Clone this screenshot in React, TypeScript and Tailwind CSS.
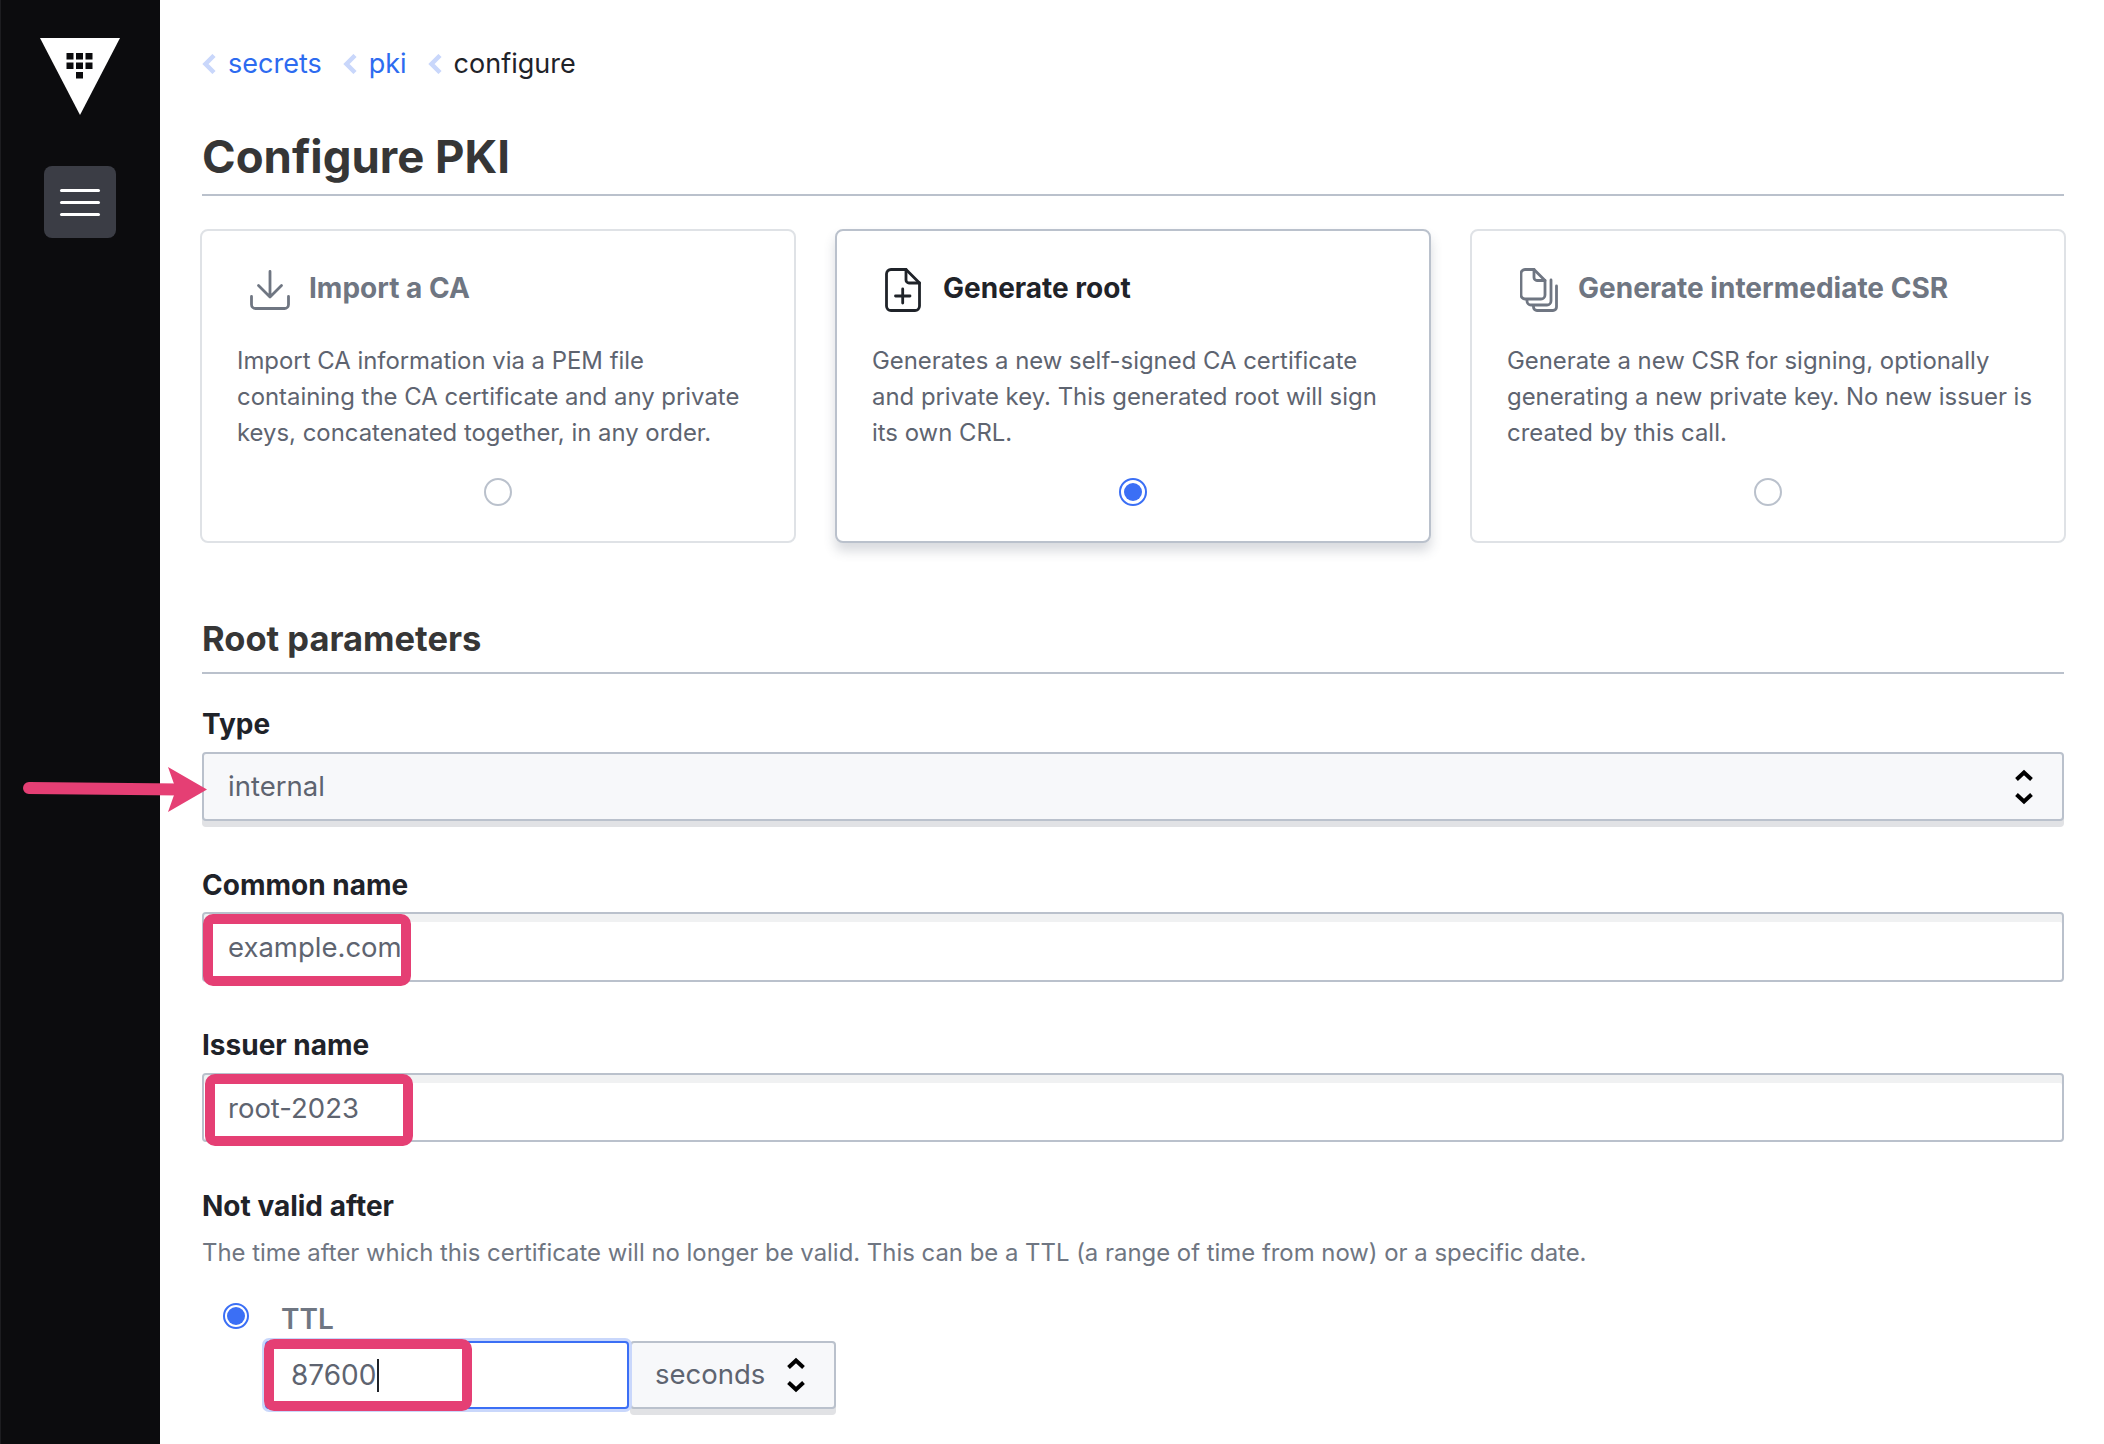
const CARDS = [
  {
    title: 'Import a CA',
    text: 'Import CA information via a PEM file containing the CA certificate and any private keys, concatenated together, in any order.',
    icon: 'import',
    gap: 'gap-[19px]',
  },
  {
    title: 'Generate root',
    text: 'Generates a new self-signed CA certificate and private key. This generated root will sign its own CRL.',
    icon: 'root',
    gap: 'gap-[22px]',
    selected: true,
  },
  {
    title: 'Generate intermediate CSR',
    text: 'Generate a new CSR for signing, optionally generating a new private key. No new issuer is created by this call.',
    icon: 'csr',
    gap: 'gap-[20px]',
  },
]

function Logo() {
  const cells = [
    [26.5, 15],
    [36, 15],
    [45.5, 15],
    [26.5, 24.5],
    [36, 24.5],
    [45.5, 24.5],
    [36, 34],
  ]
  return (
    <svg width="80" height="77" viewBox="0 0 80 77">
      <polygon points="0,0 80,0 40,77" fill="#fff" />
      {cells.map(([x, y]) => (
        <rect key={`${x}-${y}`} x={x} y={y} width="7" height="6.5" fill="#0c0c0e" />
      ))}
    </svg>
  )
}

function CardIcon({ name }: { name: string }) {
  if (name === 'import') {
    return (
      <svg width="40" height="40" viewBox="0 0 40 40" fill="none" stroke="#6f7682" strokeWidth="2.8" strokeLinecap="round" strokeLinejoin="round">
        <path d="M20 1.5V26.5M8.5 15.5L20 27L31.5 15.5" />
        <path d="M1.5 26.5V34.5a4 4 0 0 0 4 4H34.5a4 4 0 0 0 4-4V26.5" />
      </svg>
    )
  }
  if (name === 'root') {
    return (
      <svg width="36" height="44" viewBox="0 0 36 44" fill="none" stroke="#1f2329" strokeWidth="2.8" strokeLinecap="round" strokeLinejoin="round">
        <path d="M6 1.5H21L34.5 15V38a4.5 4.5 0 0 1-4.5 4.5H6A4.5 4.5 0 0 1 1.5 38V6A4.5 4.5 0 0 1 6 1.5Z" />
        <path d="M21 1.5V12a3 3 0 0 0 3 3H34.5" />
        <path d="M10.5 28H25M17.7 21V35" />
      </svg>
    )
  }
  return (
    <svg width="38" height="44" viewBox="0 0 38 44" fill="none" stroke="#6f7682" strokeWidth="2.8" strokeLinecap="round" strokeLinejoin="round">
      <path d="M5 1.5H14L25 12.5V27a4 4 0 0 1-4 4H5a4 4 0 0 1-4-4V5.5a4 4 0 0 1 4-4Z" />
      <path d="M14 1.5V9.5a3 3 0 0 0 3 3H25" />
      <path d="M7 32v1a4 4 0 0 0 4 4H27a4 4 0 0 0 4-4V12" />
      <path d="M13.5 38v1a3.5 3.5 0 0 0 3.5 3.5H33a3.5 3.5 0 0 0 3.5-3.5V18" />
    </svg>
  )
}

function Radio({ on, size = 'w-7 h-7' }: { on?: boolean; size?: string }) {
  if (on) {
    return (
      <span className={`${size} flex items-center justify-center rounded-full border-2 border-[#3b6ff5] bg-white`}>
        <span className="h-[18px] w-[18px] rounded-full bg-[#3b6ff5]" />
      </span>
    )
  }
  return <span className={`${size} rounded-full border-2 border-[#bac1cc] bg-white`} />
}

function Stepper() {
  return (
    <svg width="18" height="36" viewBox="0 0 18 36" fill="none" stroke="#000" strokeWidth="4" strokeLinejoin="miter">
      <path d="M1.5 10.5L9 3.5L16.5 10.5" />
      <path d="M1.5 25.5L9 32.5L16.5 25.5" />
    </svg>
  )
}

function Crumb({ children, current }: { children: string; current?: boolean }) {
  return (
    <span className="flex items-center gap-[12px]">
      <svg width="14" height="20" viewBox="0 0 14 20" fill="none" stroke="#c9d7fb" strokeWidth="4.5">
        <path d="M12 1.5L3.5 10L12 18.5" />
      </svg>
      <span className={current ? 'text-[#1f2329]' : 'text-[#2d6bf0]'}>{children}</span>
    </span>
  )
}

function Highlight({ className }: { className: string }) {
  return <div className={`absolute h-[72px] w-[208px] rounded-[10px] border-[10px] border-[#e53f74] ${className}`} />
}

function TextField({
  label,
  value,
  highlight,
  gap,
  height,
}: {
  label: string
  value: string
  highlight: string
  gap: string
  height: string
}) {
  return (
    <div className="mb-[45px]">
      <div className={`text-[28px] leading-[36px] font-bold text-[#1f2329] ${gap}`}>{label}</div>
      <div
        className={`relative flex items-center rounded-[4px] border-2 border-[#bac1cc] bg-white pt-[2px] pl-[24px] text-[27.5px] text-[#5e6470] shadow-[inset_0_8px_0_#f0f1f2] ${height}`}
      >
        {value}
        <Highlight className={highlight} />
      </div>
    </div>
  )
}

export default function App() {
  return (
    <div className="relative flex h-[1444px] w-[2104px] overflow-hidden bg-white font-[Inter,sans-serif]">
      <aside className="flex w-[160px] shrink-0 flex-col items-center bg-[#0c0c0e] pt-[38px] shadow-[inset_1px_0_0_#1d1d20]">
        <Logo />
        <button className="mt-[51px] flex h-[72px] w-[72px] flex-col items-center justify-center gap-[9px] rounded-[8px] bg-[#3b3d45]">
          <span className="h-[3px] w-[40px] rounded-full bg-white" />
          <span className="h-[3px] w-[40px] rounded-full bg-white" />
          <span className="h-[3px] w-[40px] rounded-full bg-white" />
        </button>
      </aside>

      <main className="min-w-0 flex-1 pt-[46px] pr-[40px] pl-[42px]">
        <nav className="flex h-[36px] items-center gap-[21px] text-[27px] leading-[36px]">
          <Crumb>secrets</Crumb>
          <Crumb>pki</Crumb>
          <Crumb current>configure</Crumb>
        </nav>

        <h1 className="mt-[47px] border-b-2 border-[#bac1cc] pb-[9px] text-[45.5px] leading-[56px] font-bold text-[#363636]">
          Configure PKI
        </h1>

        <div className="mt-[33px] -mr-[2px] -ml-[2px] grid grid-cols-3 gap-[39px]">
          {CARDS.map((card) => (
            <div
              key={card.title}
              className={`flex h-[314px] flex-col rounded-[8px] border-2 bg-white px-[35px] pt-[37px] ${
                card.selected
                  ? 'border-[#bac1cc] shadow-[0_8px_12px_rgba(60,70,90,0.2)]'
                  : 'border-[#dfe2e6]'
              }`}
            >
              <div className={`ml-[13px] flex h-[44px] items-center ${card.gap}`}>
                <CardIcon name={card.icon} />
                <span
                  className={`-mt-1 text-[28px] font-bold ${
                    card.selected ? 'text-[#1f2329]' : 'text-[#6f7682]'
                  }`}
                >
                  {card.title}
                </span>
              </div>
              <p className="mt-[31px] -mr-[8px] text-[23.9px] leading-[36px] text-[#5e6470]">{card.text}</p>
              <div className="mt-[27px] flex justify-center">
                <Radio on={card.selected} />
              </div>
            </div>
          ))}
        </div>

        <h2 className="mt-[74px] border-b-2 border-[#bac1cc] pb-[11px] text-[34.5px] leading-[44px] font-bold text-[#363636]">
          Root parameters
        </h2>

        <div className="mt-[32px] mb-[46px]">
          <div className="mb-[10px] text-[28px] leading-[36px] font-bold text-[#1f2329]">Type</div>
          <div className="flex h-[69px] items-center justify-between rounded-[4px] border-2 border-[#bac1cc] bg-[#f7f8fa] pr-[29px] pl-[24px] text-[27.5px] text-[#5e6470] shadow-[0_6px_0_#e1e2e5]">
            internal
            <Stepper />
          </div>
        </div>

        <TextField label="Common name" value="example.com" highlight="top-0 -left-px" gap="mb-[9px]" height="h-[70px]" />
        <TextField label="Issuer name" value="root-2023" highlight="-top-[1px] left-[1px]" gap="mb-[10px]" height="h-[69px]" />

        <div className="mt-[46px] text-[28px] leading-[36px] font-bold text-[#1f2329]">Not valid after</div>
        <p className="mt-[11px] text-[23.9px] leading-[36px] text-[#6f7682]">
          The time after which this certificate will no longer be valid. This can be a TTL (a range of time from now) or
          a specific date.
        </p>

        <div className="mt-[30px] ml-[21px] flex items-center">
          <span className="-mt-[6px]">
            <Radio on size="h-[26px] w-[26px]" />
          </span>
          <span className="ml-[32px] text-[28px] leading-[36px] font-semibold text-[#6f7682]">TTL</span>
        </div>

        <div className="mt-[4px] ml-[63px] flex">
          <div className="relative flex h-[68px] w-[364px] items-center rounded-[4px] border-2 border-[#3b6ff5] bg-white pl-[24px] text-[28px] text-[#5e6470] shadow-[0_0_0_3px_#c9d7fb]">
            87600
            <span className="ml-px h-[33px] w-[2px] bg-[#1f2329]" />
            <Highlight className="-top-[4px] -left-[3px]" />
          </div>
          <div className="ml-[1px] flex h-[68px] w-[206px] items-center justify-between rounded-[4px] border-2 border-[#bac1cc] bg-[#f7f8fa] pr-[29px] pl-[23px] text-[27.5px] text-[#5e6470] shadow-[0_6px_0_#e1e2e5]">
            seconds
            <Stepper />
          </div>
        </div>
      </main>

      <svg className="absolute top-[760px] left-[20px]" width="190" height="60" viewBox="0 0 190 60" fill="none">
        <line x1="9" y1="28" x2="160" y2="29.5" stroke="#e53f74" strokeWidth="12" strokeLinecap="round" />
        <polygon points="148,7 187,29.5 148,52 156,29.5" fill="#e53f74" />
      </svg>
    </div>
  )
}
